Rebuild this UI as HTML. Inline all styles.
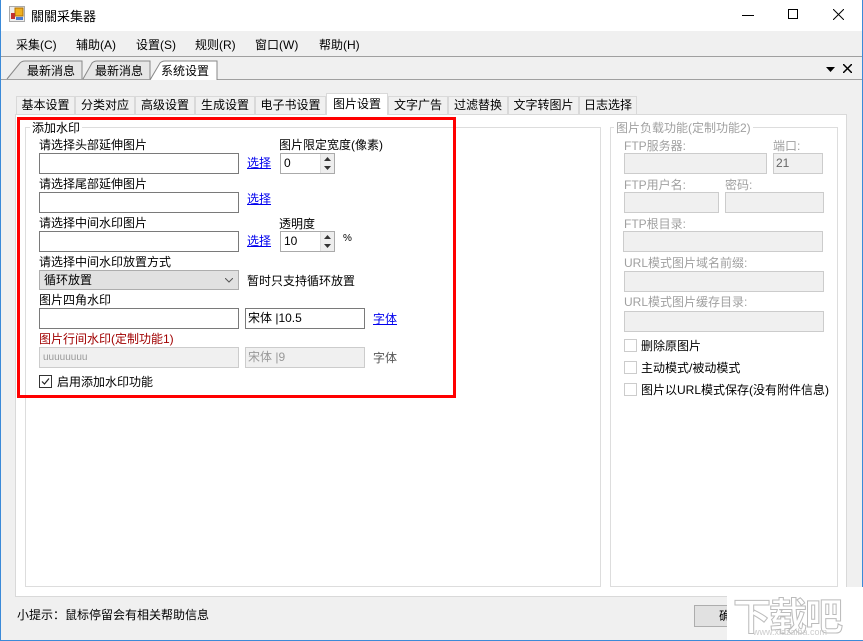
<!DOCTYPE html>
<html><head><meta charset="utf-8"><style>
*{box-sizing:border-box;margin:0;padding:0}
body{width:863px;height:641px;overflow:hidden;background:#f0f0f0;font-family:"Liberation Sans","Noto Sans CJK SC",sans-serif;font-size:12px;color:#000;position:relative}
.a{position:absolute;white-space:nowrap}
.tb{border:1px solid #7a7a7a;background:#fff;height:21px}
.dis{border:1px solid #ccc;background:#f0f0f0;color:#999}
.lnk{color:#0000ee;text-decoration:underline}
.g{color:#a0a0a0}
.tab{position:absolute;top:96px;height:18px;border:1px solid #d9d9d9;border-bottom:none;background:#f0f0f0;text-align:center;line-height:16px;font-size:12px}
.cb{position:absolute;width:13px;height:13px;border:1px solid #ccc;background:#fff}
.spin{position:absolute;width:14px;right:0;top:0;bottom:0;border-left:1px solid #ddd;background:#eee}
</style></head><body>
<div class="a" style="left:0;top:0;width:863px;height:31px;background:#fff"></div>
<div class="a" style="left:0;top:0;width:1px;height:641px;background:#3b8ad8"></div>
<div class="a" style="right:0;top:0;width:1px;height:641px;background:#3b8ad8"></div>
<div class="a" style="left:0;bottom:0;width:863px;height:1px;background:#3b8ad8"></div>
<svg class="a" style="left:9px;top:6px" width="16" height="16"><rect x="0.5" y="0.5" width="15" height="15" fill="#eee" stroke="#aaa"/><rect x="6" y="2" width="8" height="8" fill="#f0b020" stroke="#b07000"/><rect x="2" y="7" width="4" height="6" fill="#c03030"/><rect x="7" y="11" width="7" height="3" fill="#4a7ad0"/></svg>
<div class="a" style="left:31px;top:6px;font-size:13px">關關采集器</div>
<div class="a" style="left:742px;top:15px;width:12px;height:1px;background:#000"></div>
<div class="a" style="left:788px;top:9px;width:10px;height:10px;border:1px solid #000"></div>
<svg class="a" style="left:833px;top:9px" width="11" height="11"><path d="M0 0L11 11M11 0L0 11" stroke="#000" stroke-width="1"/></svg>
<div class="a" style="left:1px;top:31px;width:861px;height:24px;background:#f0f0f0"></div>
<div class="a" style="left:16px;top:36px">采集(C)</div>
<div class="a" style="left:76px;top:36px">辅助(A)</div>
<div class="a" style="left:136px;top:36px">设置(S)</div>
<div class="a" style="left:195px;top:36px">规则(R)</div>
<div class="a" style="left:255px;top:36px">窗口(W)</div>
<div class="a" style="left:319px;top:36px">帮助(H)</div>
<div class="a" style="left:1px;top:56px;width:861px;height:1px;background:#a0a0a0"></div>
<div class="a" style="left:1px;top:79px;width:861px;height:1px;background:#a0a0a0"></div>
<svg class="a" style="left:0;top:58px" width="230" height="22"><path d="M7 21L20 5Q22 3 25 3H82V21" fill="#e6e6e6" stroke="#888"/><path d="M83 21L92 5Q94 3 97 3H150V21" fill="#e6e6e6" stroke="#888"/><path d="M150 22L160 5Q162 3 165 3H217V22" fill="#fff" stroke="#888"/></svg>
<div class="a" style="left:27px;top:62px">最新消息</div>
<div class="a" style="left:95px;top:62px">最新消息</div>
<div class="a" style="left:161px;top:62px">系统设置</div>
<svg class="a" style="left:826px;top:67px" width="9" height="5"><path d="M0 0H9L4.5 5Z" fill="#000"/></svg>
<svg class="a" style="left:843px;top:64px" width="9" height="9"><path d="M0 0L9 9M9 0L0 9" stroke="#000" stroke-width="1.5"/></svg>
<div class="a" style="left:15px;top:114px;width:832px;height:483px;background:#fff;border:1px solid #d9d9d9"></div>
<div class="tab" style="left:16px;width:59px">基本设置</div>
<div class="tab" style="left:75px;width:60px">分类对应</div>
<div class="tab" style="left:135px;width:60px">高级设置</div>
<div class="tab" style="left:195px;width:60px">生成设置</div>
<div class="tab" style="left:255px;width:71px">电子书设置</div>
<div class="tab" style="left:326px;width:62px;top:93px;height:22px;background:#fff;line-height:20px">图片设置</div>
<div class="tab" style="left:388px;width:60px">文字广告</div>
<div class="tab" style="left:448px;width:60px">过滤替换</div>
<div class="tab" style="left:508px;width:71px">文字转图片</div>
<div class="tab" style="left:579px;width:58px">日志选择</div>
<div class="a" style="left:25px;top:127px;width:576px;height:460px;border:1px solid #ddd"></div>
<div class="a" style="left:30px;top:119px;background:#fff;padding:0 2px">添加水印</div>
<div class="a" style="left:39px;top:136px">请选择头部延伸图片</div>
<div class="a" style="left:279px;top:136px">图片限定宽度(像素)</div>
<div class="a tb" style="left:39px;top:153px;width:200px"></div>
<div class="a lnk" style="left:247px;top:154px">选择</div>
<div class="a tb" style="left:280px;top:153px;width:55px;border-color:#aaa;padding-left:3px;line-height:19px">0<div class="spin"><svg style="position:absolute;left:3px;top:3px" width="7" height="13"><path d="M0 4L3.5 0L7 4Z M0 9L3.5 13L7 9Z" fill="#333"/></svg></div></div>
<div class="a" style="left:39px;top:175px">请选择尾部延伸图片</div>
<div class="a tb" style="left:39px;top:192px;width:200px"></div>
<div class="a lnk" style="left:247px;top:190px">选择</div>
<div class="a" style="left:39px;top:214px">请选择中间水印图片</div>
<div class="a" style="left:279px;top:215px">透明度</div>
<div class="a tb" style="left:39px;top:231px;width:200px"></div>
<div class="a lnk" style="left:247px;top:232px">选择</div>
<div class="a tb" style="left:280px;top:231px;width:55px;border-color:#aaa;padding-left:3px;line-height:19px">10<div class="spin"><svg style="position:absolute;left:3px;top:3px" width="7" height="13"><path d="M0 4L3.5 0L7 4Z M0 9L3.5 13L7 9Z" fill="#333"/></svg></div></div>
<div class="a" style="left:343px;top:233px;font-size:10px">%</div>
<div class="a" style="left:39px;top:253px">请选择中间水印放置方式</div>
<div class="a" style="left:39px;top:270px;width:200px;height:20px;border:1px solid #adadad;background:#e1e1e1;padding-left:4px;line-height:18px">循环放置</div>
<svg class="a" style="left:225px;top:278px" width="8" height="5"><path d="M0 0L4 4L8 0" fill="none" stroke="#555"/></svg>
<div class="a" style="left:247px;top:272px">暂时只支持循环放置</div>
<div class="a" style="left:39px;top:291px">图片四角水印</div>
<div class="a tb" style="left:39px;top:308px;width:200px"></div>
<div class="a tb" style="left:245px;top:308px;width:120px;padding-left:2px;line-height:19px">宋体 |10.5</div>
<div class="a lnk" style="left:373px;top:310px">字体</div>
<div class="a" style="left:39px;top:330px;color:#a00000">图片行间水印(定制功能1)</div>
<div class="a dis" style="left:39px;top:347px;width:200px;height:21px;padding-left:3px;line-height:19px;font-size:10px">uuuuuuuu</div>
<div class="a dis" style="left:245px;top:347px;width:120px;height:21px;padding-left:2px;line-height:19px">宋体 |9</div>
<div class="a" style="left:373px;top:349px;color:#555">字体</div>
<div class="cb" style="left:39px;top:375px;border-color:#333"></div>
<svg class="a" style="left:40px;top:376px" width="11" height="11"><path d="M2 5.5L4.5 8L9 2.5" fill="none" stroke="#222" stroke-width="1.2"/></svg>
<div class="a" style="left:57px;top:373px">启用添加水印功能</div>
<div class="a" style="left:17px;top:117px;width:439px;height:281px;border:3px solid #ff0000"></div>
<div class="a" style="left:610px;top:127px;width:228px;height:460px;border:1px solid #ddd"></div>
<div class="a g" style="left:614px;top:119px;background:#fff;padding:0 2px">图片负载功能(定制功能2)</div>
<div class="a g" style="left:624px;top:137px">FTP服务器:</div>
<div class="a g" style="left:773px;top:137px">端口:</div>
<div class="a dis" style="left:624px;top:153px;width:143px;height:21px"></div>
<div class="a dis" style="left:773px;top:153px;width:50px;height:21px;color:#666;padding-left:2px;line-height:19px">21</div>
<div class="a g" style="left:624px;top:176px">FTP用户名:</div>
<div class="a g" style="left:725px;top:176px">密码:</div>
<div class="a dis" style="left:624px;top:192px;width:95px;height:21px"></div>
<div class="a dis" style="left:725px;top:192px;width:99px;height:21px"></div>
<div class="a g" style="left:624px;top:215px">FTP根目录:</div>
<div class="a dis" style="left:623px;top:231px;width:200px;height:21px"></div>
<div class="a g" style="left:624px;top:254px">URL模式图片域名前缀:</div>
<div class="a dis" style="left:624px;top:271px;width:200px;height:21px"></div>
<div class="a g" style="left:624px;top:293px">URL模式图片缓存目录:</div>
<div class="a dis" style="left:624px;top:311px;width:200px;height:21px"></div>
<div class="cb" style="left:624px;top:339px"></div><div class="a" style="left:641px;top:337px">删除原图片</div>
<div class="cb" style="left:624px;top:361px"></div><div class="a" style="left:641px;top:359px">主动模式/被动模式</div>
<div class="cb" style="left:624px;top:383px"></div><div class="a" style="left:641px;top:381px">图片以URL模式保存(没有附件信息)</div>
<div class="a" style="left:17px;top:606px">小提示：鼠标停留会有相关帮助信息</div>
<div class="a" style="left:694px;top:605px;width:60px;height:22px;border:1px solid #adadad;background:#e1e1e1;padding-left:24px;line-height:20px">确</div>
<div class="a" style="left:727px;top:587px;width:136px;height:53px;background:#fff"></div>
<div class="a" style="left:733px;top:586px;font-size:38px;font-weight:bold;color:#fff;-webkit-text-stroke:1px #bbb;letter-spacing:-2px">下载吧</div>
<div class="a" style="left:753px;top:627px;font-size:9px;color:#ccc">www.xiazaiba.com</div>
</body></html>
